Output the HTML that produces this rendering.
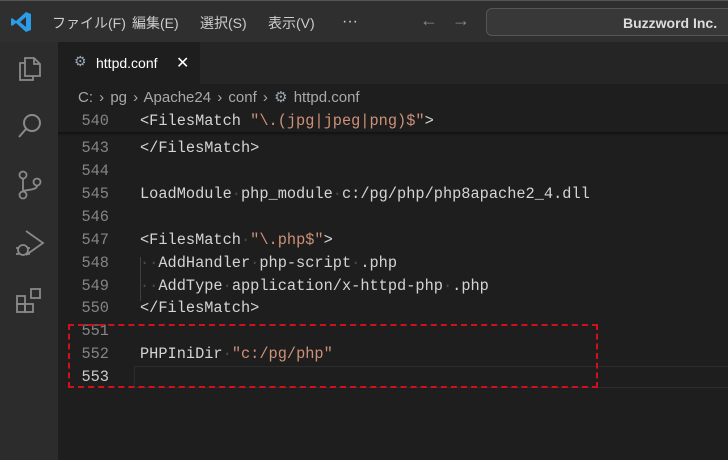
<!DOCTYPE html>
<html><head><meta charset="utf-8"><style>
*{margin:0;padding:0;box-sizing:border-box}
body{width:728px;height:460px;background:#1e1e1e;position:relative;overflow:hidden;font-family:"Liberation Sans","Noto Sans CJK JP",sans-serif}
.title{position:absolute;left:0;top:0;width:728px;height:42px;background:#2f2f2f;border-top:1px solid #555}
.menu{position:absolute;top:12px;color:#ccc;font-size:14px}
.act{position:absolute;left:0;top:42px;width:58px;height:418px;background:#2c2c2c}
.tabs{position:absolute;left:58px;top:42px;width:670px;height:42px;background:#252526}
.tab{position:absolute;left:0;top:0;width:142px;height:42px;background:#1e1e1e;color:#fff;font-size:14px}
.bc{position:absolute;left:78px;top:88px;color:#a9a9a9;font-size:15px;word-spacing:2px}
.code{position:absolute;left:0;top:0;font-family:"Liberation Mono",monospace;font-size:15.3px}
.ln{position:absolute;left:60px;width:49px;text-align:right;color:#858585}
.tx{position:absolute;left:140px;color:#d4d4d4;white-space:pre}
.s{color:#ce9178}.d{color:#4a4a4a}
</style></head><body>
<div class="title">
<svg style="position:absolute;left:10px;top:10px" width="22" height="22" viewBox="0 0 22 22"><path d="M16 1 L21 3 V19 L16 21 L6 12 L2 15 L1 14 V8 L2 7 L6 10 Z M16 6 L10 11 L16 16Z" fill="#2c9be8"/></svg>
<span class="menu" style="left:52px">ファイル(F)</span>
<span class="menu" style="left:132px">編集(E)</span>
<span class="menu" style="left:200px">選択(S)</span>
<span class="menu" style="left:268px">表示(V)</span>
<span class="menu" style="left:342px;top:12px;font-size:16px">···</span>
<span class="menu" style="left:420px;top:9px;font-size:18px;color:#888">←</span>
<span class="menu" style="left:452px;top:9px;font-size:18px;color:#888">→</span>
<div style="position:absolute;left:486px;top:7px;width:250px;height:28px;border:1px solid #555;border-radius:6px;background:#383838;color:#ddd;font-size:14px;padding:6px 0 0 136px;font-weight:bold">Buzzword Inc.</div>
</div>
<div class="act">
<svg style="position:absolute;left:16px;top:12px" width="28" height="28" fill="none" stroke="#8a8a8a" stroke-width="1.8"><path d="M9 4h9l6 6v12H9z M18 4v6h6 M9 9H4v17h13v-4"/></svg>
<svg style="position:absolute;left:16px;top:70px" width="28" height="28" fill="none" stroke="#8a8a8a" stroke-width="2"><circle cx="16" cy="11" r="8"/><path d="M10 17 3 25"/></svg>
<svg style="position:absolute;left:16px;top:128px" width="28" height="30" fill="none" stroke="#8a8a8a" stroke-width="1.8"><circle cx="7" cy="5" r="3.5"/><circle cx="7" cy="25" r="3.5"/><circle cx="21" cy="12" r="3.5"/><path d="M7 9v12 M21 16c0 5-14 3-14 6"/></svg>
<svg style="position:absolute;left:14px;top:186px" width="32" height="32" fill="none" stroke="#8a8a8a" stroke-width="1.8"><path d="M12 3l17 12-17 12" /><circle cx="9" cy="22" r="5"/><path d="M2 20h3M2 26h3M13 20h3M13 26h3"/></svg>
<svg style="position:absolute;left:14px;top:244px" width="32" height="32" fill="none" stroke="#8a8a8a" stroke-width="1.8"><rect x="3" y="10" width="8" height="8"/><rect x="3" y="18" width="8" height="8"/><rect x="11" y="18" width="8" height="8"/><rect x="17" y="3" width="9" height="9"/></svg>
</div>
<div class="tabs"><div class="tab"><span style="position:absolute;left:16px;top:11px;color:#9aa6b2">⚙</span><span style="position:absolute;left:38px;top:13px">httpd.conf</span><span style="position:absolute;left:118px;top:11px;font-size:16px">✕</span></div></div>
<div class="bc">C: › pg › Apache24 › conf › <span style="color:#9aa6b2">⚙</span> httpd.conf</div>
<div style="position:absolute;left:58px;top:132px;width:670px;height:4px;background:linear-gradient(#111,#1e1e1e)"></div>
<div class="code">
<div class="ln" style="top:112px">540</div><div class="tx" style="top:112px">&lt;FilesMatch <span class="s">"\.(jpg|jpeg|png)$"</span>&gt;</div>
<div class="ln" style="top:139px">543</div><div class="tx" style="top:139px">&lt;/FilesMatch&gt;</div>
<div class="ln" style="top:162px">544</div>
<div class="ln" style="top:185px">545</div><div class="tx" style="top:185px">LoadModule<span class="d">·</span>php_module<span class="d">·</span>c:/pg/php/php8apache2_4.dll</div>
<div class="ln" style="top:208px">546</div>
<div class="ln" style="top:231px">547</div><div class="tx" style="top:231px">&lt;FilesMatch<span class="d">·</span><span class="s">"\.php$"</span>&gt;</div>
<div class="ln" style="top:254px">548</div><div class="tx" style="top:254px"><span class="d">··</span>AddHandler<span class="d">·</span>php-script<span class="d">·</span>.php</div>
<div class="ln" style="top:277px">549</div><div class="tx" style="top:277px"><span class="d">··</span>AddType<span class="d">·</span>application/x-httpd-php<span class="d">·</span>.php</div>
<div class="ln" style="top:299px">550</div><div class="tx" style="top:299px">&lt;/FilesMatch&gt;</div>
<div class="ln" style="top:322px">551</div>
<div class="ln" style="top:345px">552</div><div class="tx" style="top:345px">PHPIniDir<span class="d">·</span><span class="s">"c:/pg/php"</span></div>
<div class="ln" style="top:368px;color:#ccc">553</div>
</div>
<div style="position:absolute;left:140px;top:257px;width:1px;height:44px;background:#404040"></div>
<div style="position:absolute;left:134px;top:366px;width:600px;height:22px;border:1px solid #2c2c2c"></div>
<div style="position:absolute;left:68px;top:324px;width:530px;height:64px;border:2px dashed #d0111b"></div>
</body></html>
